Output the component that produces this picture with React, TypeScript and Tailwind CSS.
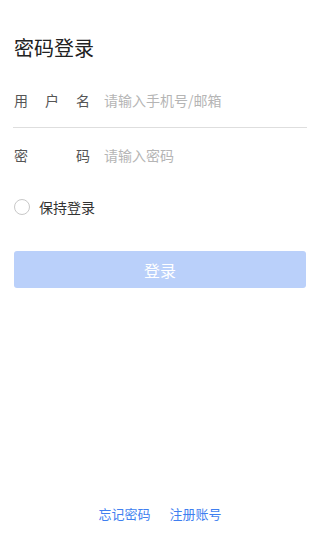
import React from "react";

export default function App() {
  return (
    <div
      className="flex min-h-[550px] w-[320px] flex-col bg-white px-[14px]"
      style={{ fontFamily: '"Noto Sans CJK SC", "Noto Sans", sans-serif' }}
    >
      <h1 className="pt-[34px] text-[20px] leading-[28px] font-normal text-[#222]">密码登录</h1>

      <div className="mt-[12px]">
        <div className="-mx-px flex h-[54px] items-center border-b border-[#dedede] px-px">
          <span className="w-[76px] text-[14px] text-[#555] [text-align-last:justify]">用户名</span>
          <input
            className="ml-[14px] flex-1 bg-transparent text-[14px] text-[#333] outline-none placeholder:text-[#b5b5b5]"
            placeholder="请输入手机号/邮箱"
          />
        </div>
        <div className="flex h-[54px] items-center">
          <span className="w-[76px] text-[14px] text-[#555] [text-align-last:justify]">密码</span>
          <input
            type="password"
            className="ml-[14px] flex-1 bg-transparent text-[14px] text-[#333] outline-none placeholder:text-[#b5b5b5]"
            placeholder="请输入密码"
          />
        </div>
      </div>

      <label className="mt-[15px] flex h-[20px] items-center">
        <span className="h-[16px] w-[16px] rounded-full border border-[#c8c8c8]" />
        <span className="ml-[9px] text-[14px] text-[#333]">保持登录</span>
      </label>

      <button className="mt-[34px] h-[37px] w-full rounded-[3px] bg-[#bad0fa] text-[16px] text-white">
        登录
      </button>

      <div className="mt-auto flex justify-center gap-[19px] pb-[27px] text-[13px] leading-[18px] text-[#3f7ff0]">
        <span>忘记密码</span>
        <span>注册账号</span>
      </div>
    </div>
  );
}
